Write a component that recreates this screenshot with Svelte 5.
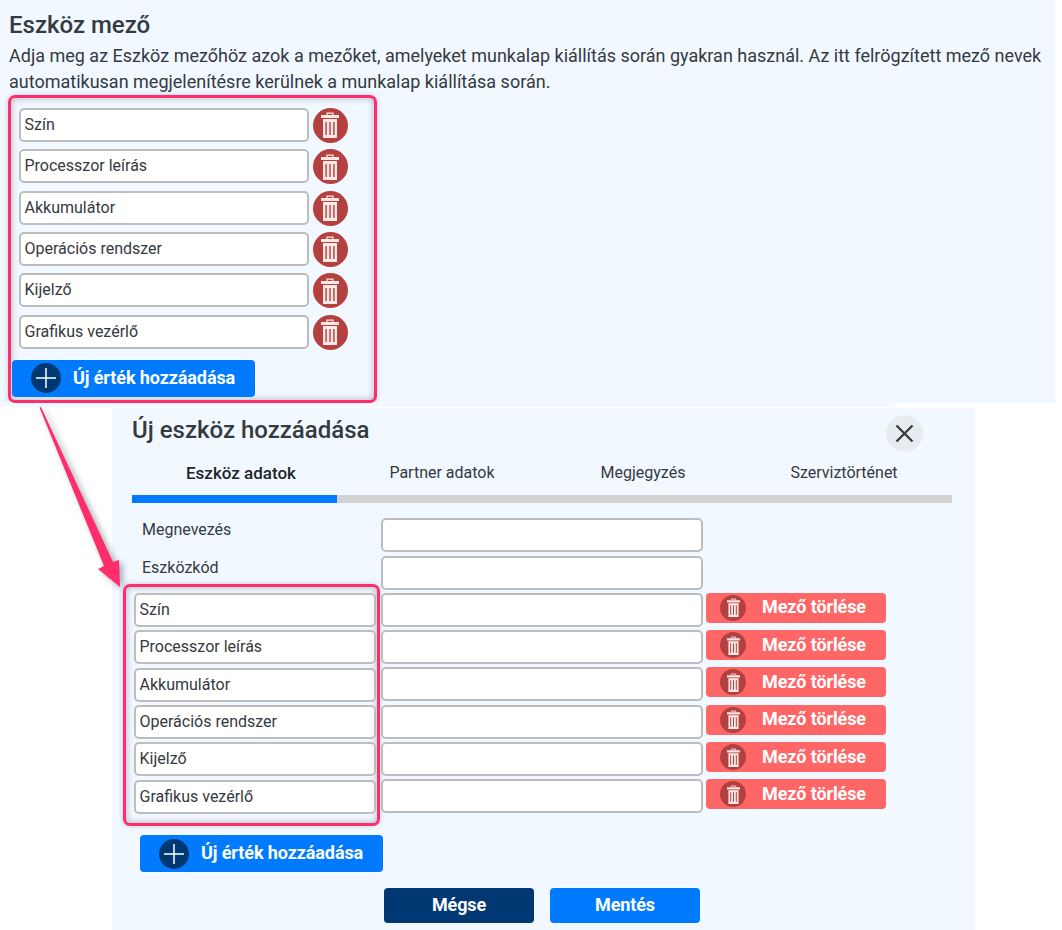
<script>
  const topFields = ['Szín', 'Processzor leírás', 'Akkumulátor', 'Operációs rendszer', 'Kijelző', 'Grafikus vezérlő'];
  const tabs = ['Eszköz adatok', 'Partner adatok', 'Megjegyzés', 'Szerviztörténet'];
</script>

{#snippet trash()}
  <svg class="trash" viewBox="0 0 18 26" aria-hidden="true">
    <path d="M6 3V1.2h6V3" fill="none" stroke="currentColor" stroke-width="1.2"/>
    <rect x="0" y="3" width="18" height="3" fill="currentColor"/>
    <path fill-rule="evenodd" fill="currentColor" d="M2 7h14v19H2zM4.4 10v13h1.4V10zM8.3 10v13h1.4V10zM12.2 10v13h1.4V10z"/>
  </svg>
{/snippet}

{#snippet addBtn()}
  <button class="add">
    <span class="plus">
      <svg viewBox="0 0 30 30" aria-hidden="true"><path d="M15 5v20M5 15h20" stroke="#fff" stroke-width="1.5"/></svg>
    </span>
    <span class="btn-text">Új érték hozzáadása</span>
  </button>
{/snippet}

<main>
  <section class="top">
    <h1>Eszköz mező</h1>
    <p>Adja meg az Eszköz mezőhöz azok a mezőket, amelyeket munkalap kiállítás során gyakran használ. Az itt felrögzített mező nevek automatikusan megjelenítésre kerülnek a munkalap kiállítása során.</p>
    <div class="frame top-frame">
      {#each topFields as f}
        <div class="top-row">
          <div class="input t-input">{f}</div>
          <span class="round">{@render trash()}</span>
        </div>
      {/each}
      {@render addBtn()}
    </div>
  </section>
  <div class="shelf"></div>

  <section class="modal">
    <header>
      <h2>Új eszköz hozzáadása</h2>
      <button class="close" aria-label="Bezárás">
        <svg viewBox="0 0 37 37"><path d="M10.5 10.5l16 16M26.5 10.5l-16 16" stroke="#343a40" stroke-width="2.3"/></svg>
      </button>
    </header>
    <nav>
      <div class="tabs">
        {#each tabs as t, i}
          <div class="tab" class:active={i === 0}>{t}</div>
        {/each}
      </div>
      <div class="bar"><div class="bar-fill"></div></div>
    </nav>
    <div class="form-row"><span class="lbl">Megnevezés</span><div class="input val"></div></div>
    <div class="form-row"><span class="lbl">Eszközkód</span><div class="input val"></div></div>
    <div class="dyn">
      <div class="frame dyn-frame">
        {#each topFields as f}
          <div class="input m-input">{f}</div>
        {/each}
      </div>
      <div class="dyn-vals">
        {#each topFields as f}
          <div class="val-row">
            <div class="input val"></div>
            <button class="del">
              <span class="round small">{@render trash()}</span>
              <span class="btn-text">Mező törlése</span>
            </button>
          </div>
        {/each}
      </div>
    </div>
    <div class="add-wrap">{@render addBtn()}</div>
    <footer>
      <button class="foot navy">Mégse</button>
      <button class="foot blue">Mentés</button>
    </footer>
  </section>

  <svg class="arrow" viewBox="0 0 140 200" aria-hidden="true">
    <polygon points="19.5,7.5 21,7 93,162 99,160 100,187 78,169 84,166" fill="#ff2d6b"/>
  </svg>
</main>

<style>
  :global(body) { margin: 0; background: #fff; }
  main {
    position: relative;
    width: 1062px;
    height: 930px;
    overflow: hidden;
    font-family: Roboto, "Liberation Sans", sans-serif;
    color: #343a40;
  }
  button { font-family: inherit; border: 0; padding: 0; }
  .top {
    width: 1055px;
    height: 403px;
    box-sizing: border-box;
    background: #f1f8ff;
    padding: 11px 0 0 9px;
  }
  .shelf { width: 895px; height: 4px; margin-bottom: 1px; background: #f1f8ff; }
  h1 { margin: 0; font-size: 24px; line-height: 28px; font-weight: 500; }
  p { margin: 4px 0 0; width: 1040px; font-size: 18px; line-height: 26px; }
  .frame {
    box-sizing: border-box;
    border: 3.5px solid #ff2d6b;
    border-radius: 7px;
    box-shadow: inset 0 0 7px rgba(60, 70, 90, .4), 0 0 5px rgba(60, 70, 90, .25);
  }
  .top-frame {
    width: 369px;
    height: 308px;
    margin-left: -1px;
    padding: 9.9px 0 0 7.5px;
  }
  .top-row { display: flex; gap: 4px; height: 41.35px; }
  .input {
    box-sizing: border-box;
    background: #fff;
    border: 2px solid #bdbdbd;
    border-radius: 5px;
    height: 34px;
    line-height: 29px;
    padding-left: 4px;
    font-size: 16px;
  }
  .t-input { width: 290px; }
  .round {
    width: 35px;
    height: 35px;
    border-radius: 50%;
    background: #b54040;
    color: #fbe9e6;
    display: flex;
    align-items: center;
    justify-content: center;
    flex: none;
  }
  .trash { width: 18px; height: 26px; }
  .btn-text { margin-bottom: 2px; }
  .add {
    display: flex;
    align-items: center;
    width: 243px;
    height: 37px;
    background: #007bff;
    color: #fff;
    border-radius: 4px;
    font-size: 18px;
    font-weight: 700;
    letter-spacing: -0.1px;
    padding-left: 19px;
    gap: 12px;
  }
  .top-frame .add { margin: 3.6px 0 0 -6.5px; }
  .plus { width: 30px; height: 30px; border-radius: 50%; background: #003873; display: block; flex: none; }
  .plus svg { display: block; width: 30px; height: 30px; }

  .modal {
    width: 863px;
    height: 522px;
    margin-left: 112px;
    box-sizing: border-box;
    background: #f1f8ff;
    padding-left: 20px;
  }
  header { display: flex; width: 820px; height: 50px; position: relative; }
  h2 { margin: 0; font-size: 24px; line-height: 44px; font-weight: 500; }
  .close {
    position: absolute;
    right: 29px;
    top: 7px;
    width: 37px;
    height: 37px;
    border-radius: 50%;
    background: #e9ecef;
  }
  .close svg { display: block; width: 37px; height: 37px; }
  nav { width: 820px; height: 45px; }
  .tabs { display: flex; height: 37px; padding-left: 8.5px; }
  .tab {
    width: 201px;
    flex: none;
    text-align: center;
    font-size: 16px;
    line-height: 30px;
  }
  .tab.active { font-size: 17px; font-weight: 500; color: #212529; }
  .bar { height: 8px; background: #d3d3d3; }
  .bar-fill { width: 205px; height: 8px; background: #007bff; }
  .form-row { display: flex; height: 38px; }
  nav + .form-row { margin-top: 15px; }
  .lbl { width: 249px; padding-left: 10px; box-sizing: border-box; font-size: 16px; line-height: 24px; flex: none; }
  .val { width: 322px; flex: none; }
  .dyn { display: flex; margin-top: -10px; margin-left: -9.5px; }
  .dyn-frame {
    width: 257.5px;
    height: 242px;
    padding: 5.9px 0 0 8px;
  }
  .m-input { width: 242px; margin-bottom: 3.4px; height: 34px; }
  .dyn-vals { padding-top: 8.9px; margin-left: 1px; }
  .val-row { display: flex; height: 37.3px; gap: 3px; }
  .del {
    width: 180px;
    height: 30px;
    display: flex;
    align-items: center;
    background: #ff6666;
    color: #fff;
    border-radius: 4px;
    font-size: 18px;
    font-weight: 700;
    letter-spacing: -0.1px;
    padding-left: 14px;
    gap: 16px;
  }
  .round.small { width: 26px; height: 26px; }
  .round.small .trash { width: 13px; height: 19px; }
  .add-wrap { margin: 9px 0 0 8px; }
  footer { display: flex; gap: 16px; margin: 16px 0 0 252px; }
  .foot {
    width: 150px;
    height: 35px;
    border-radius: 4px;
    color: #fff;
    font-size: 18px;
    font-weight: 700;
    letter-spacing: -0.1px;
    padding-bottom: 2px;
  }
  .navy { background: #003873; }
  .blue { background: #007bff; }
  .arrow {
    position: absolute;
    left: 20px;
    top: 400px;
    width: 140px;
    height: 200px;
    filter: drop-shadow(3px 2px 3px rgba(60, 70, 90, .45));
    pointer-events: none;
  }
</style>
